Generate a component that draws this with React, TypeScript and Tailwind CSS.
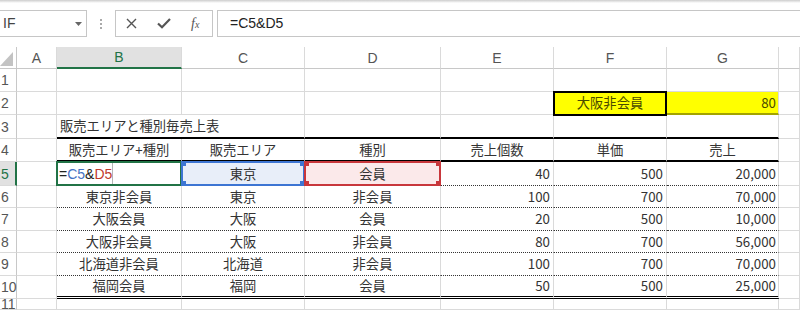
import React from "react";

const CJK = '"Noto Sans CJK JP", "Noto Sans", sans-serif';
const LAT = '"Liberation Sans", Arial, sans-serif';

const rowHeights = [23, 23, 24, 23, 24, 22, 23, 22, 23, 23, 11];

const data: string[][] = [
  ["", "東京", "会員", "40", "500", "20,000"],
  ["東京非会員", "東京", "非会員", "100", "700", "70,000"],
  ["大阪会員", "大阪", "会員", "20", "500", "10,000"],
  ["大阪非会員", "大阪", "非会員", "80", "700", "56,000"],
  ["北海道非会員", "北海道", "非会員", "100", "700", "70,000"],
  ["福岡会員", "福岡", "会員", "50", "500", "25,000"],
];

const headers = ["販売エリア+種別", "販売エリア", "種別", "売上個数", "単価", "売上"];

function Corners({ color }: { color: string }) {
  const sq = "absolute w-[5px] h-[5px]";
  return (
    <>
      <div className={`${sq} left-[-2px] top-[-2px]`} style={{ background: color }} />
      <div className={`${sq} right-[-2px] top-[-2px]`} style={{ background: color }} />
      <div className={`${sq} left-[-2px] bottom-[-2px]`} style={{ background: color }} />
      <div className={`${sq} right-[-2px] bottom-[-2px]`} style={{ background: color }} />
    </>
  );
}

function RowHeader({ n, active }: { n: number; active?: boolean }) {
  return (
    <div
      className={`flex items-center pl-px text-[14px] leading-none border-b border-b-[#dadada] ${
        active
          ? "bg-[#e1e1e1] text-[#217346] border-r-2 border-r-[#217346]"
          : "bg-white text-[#555] border-r border-r-[#c8c8c8]"
      }`}
      style={{ fontFamily: LAT }}
    >
      {n}
    </div>
  );
}

export default function App() {
  const colLetters = ["A", "B", "C", "D", "E", "F", "G", ""];
  const base = "relative flex items-center leading-none whitespace-nowrap border-r border-r-[#dadada]";
  const gridB = "border-b border-b-[#dadada]";
  const blackB = "border-b-2 border-b-black";
  const dotB = "border-b border-b-[#333] [border-bottom-style:dotted]";
  const dblB = "border-b-[3px] border-b-black [border-bottom-style:double]";

  const cells: React.ReactNode[] = [];

  cells.push(
    <div key="corner" className="flex items-end bg-white border-r border-r-[#c8c8c8] border-b border-b-[#c8c8c8]">
      <svg width="16" height="21" viewBox="0 0 16 21">
        <polygon points="13,5 13,19 0,19" fill="#c3c3c3" />
      </svg>
    </div>
  );
  colLetters.forEach((l, i) => {
    const active = l === "B";
    cells.push(
      <div
        key={"h" + i}
        className={`flex items-center justify-center text-[14px] leading-none ${
          active
            ? "bg-[#e1e1e1] text-[#217346] border-b-2 border-b-[#217346]"
            : "bg-white text-[#555] border-b border-b-[#c8c8c8]"
        } border-r border-r-[#dadada]`}
        style={{ fontFamily: LAT }}
      >
        {l}
      </div>
    );
  });

  for (let r = 1; r <= 11; r++) {
    cells.push(<RowHeader key={"rh" + r} n={r} active={r === 5} />);
    for (let c = 1; c <= 8; c++) {
      const key = `c${r}-${c}`;
      const inTable = c >= 2 && c <= 7;
      let bottom = gridB;
      if (inTable && (r === 3 || r === 4)) bottom = blackB;
      if (inTable && r >= 5 && r <= 9) bottom = dotB;
      if (inTable && r === 10) bottom = dblB;
      let cls = `${base} ${bottom}`;
      let content: React.ReactNode = null;

      if (r === 2 && c === 6) {
        cls += " bg-[#ffff00] justify-center";
        content = (
          <>
            <span className="text-[#4a4a00]">大阪非会員</span>
            <div className="absolute left-[-1px] top-[-1px] w-[114px] h-[25px] border-2 border-black z-10" />
          </>
        );
      } else if (r === 2 && c === 7) {
        cls = `${base} border-b-2 border-b-[#a3a300] bg-[#ffff00] justify-end pr-[2px]`;
        content = <span className="text-[#4a4a00]">80</span>;
      } else if (r === 3 && c === 2) {
        cls = `relative flex items-center leading-none whitespace-nowrap ${bottom} pl-[3px] z-10`;
        content = <span>販売エリアと種別毎売上表</span>;
      } else if (r === 4 && inTable) {
        cls += " justify-center";
        content = <span>{headers[c - 2]}</span>;
      } else if (r >= 5 && r <= 10 && inTable) {
        const row = data[r - 5];
        const v = row[c - 2];
        if (r === 5 && c === 2) {
          cls += " justify-start pl-[2px]";
          content = (
            <>
              <span className="w-[53px] text-[14px]" style={{ fontFamily: LAT }}>
                <span className="text-[#222]">=</span>
                <span className="text-[#4472c4]">C5</span>
                <span className="text-[#222]">&amp;</span>
                <span className="text-[#c0392b]">D5</span>
              </span>
              <div className="self-stretch w-px bg-[#b5b5b5]" />
              <div className="absolute left-[-1px] top-[-1px] w-[126px] h-[25px] border-2 border-[#217346] z-10" />
            </>
          );
        } else {
          if (c <= 4) cls += " justify-center";
          else cls += c === 7 ? " justify-end pr-[2px]" : " justify-end pr-[3px]";
          if (r === 5 && c === 3) {
            cls += " bg-[#e8eef9]";
            content = (
              <>
                <span>{v}</span>
                <div className="absolute left-[-1px] top-[-1px] w-[124px] h-[25px] border-2 border-[#3d75d3] z-20">
                  <Corners color="#3d75d3" />
                </div>
              </>
            );
          } else if (r === 5 && c === 4) {
            cls += " bg-[#fbe9ea]";
            content = (
              <>
                <span>{v}</span>
                <div className="absolute left-[-1px] top-[-1px] w-[137px] h-[25px] border-2 border-[#c8373c] z-20">
                  <Corners color="#c8373c" />
                </div>
              </>
            );
          } else {
            content = <span>{v}</span>;
          }
        }
      }
      cells.push(
        <div key={key} className={cls}>
          {content}
        </div>
      );
    }
  }

  return (
    <div
      className="w-[800px] h-[310px] bg-white overflow-hidden text-[13.3px] text-[#333]"
      style={{ fontFamily: CJK }}
    >
      <div className="h-[3px] bg-gradient-to-b from-[#cdcdcd] to-white" />
      <div className="flex items-start pt-[7px] h-[44px]">
        <div className="w-[87px] h-[27px] border border-l-0 border-[#c6c6c6] flex items-center justify-between pl-[3px] pr-[4px]">
          <span className="text-[14px] text-[#444]" style={{ fontFamily: LAT }}>
            IF
          </span>
          <svg width="7" height="4" viewBox="0 0 7 4">
            <polygon points="0,0 7,0 3.5,4" fill="#666" />
          </svg>
        </div>
        <div className="w-[28px] h-[27px] flex flex-col items-center justify-center gap-[2px]">
          <div className="w-[2px] h-[2px] bg-[#aaa]" />
          <div className="w-[2px] h-[2px] bg-[#aaa]" />
          <div className="w-[2px] h-[2px] bg-[#aaa]" />
        </div>
        <div className="w-[98px] h-[27px] border border-[#c6c6c6] flex items-center pl-[10px] gap-[20px]">
          <svg width="11" height="11" viewBox="0 0 11 11">
            <path d="M1 1 L10 10 M10 1 L1 10" stroke="#555" strokeWidth="1.4" />
          </svg>
          <svg width="14" height="11" viewBox="0 0 14 11">
            <path d="M1 5.5 L5 9.3 L13 1" stroke="#555" strokeWidth="2.2" fill="none" />
          </svg>
          <span
            className="text-[14px] italic text-[#555] leading-none"
            style={{ fontFamily: '"Liberation Serif", serif' }}
          >
            f<span className="text-[10px]">x</span>
          </span>
        </div>
        <div className="ml-[4px] flex-1 h-[27px] border border-r-0 border-[#c6c6c6] flex items-center pl-[12px]">
          <span className="text-[14px] text-[#222]" style={{ fontFamily: LAT }}>
            =C5&amp;D5
          </span>
        </div>
      </div>
      <div
        className="grid grid-cols-[17px_40px_125px_123px_136px_113px_113px_112px_21px]"
        style={{ gridTemplateRows: `22px ${rowHeights.map((h) => h + "px").join(" ")}` }}
      >
        {cells}
      </div>
    </div>
  );
}
